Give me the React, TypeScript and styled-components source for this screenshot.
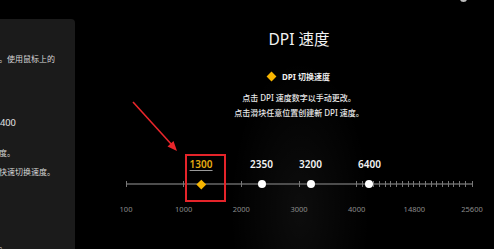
import styled, { createGlobalStyle } from "styled-components"

const GlobalStyle = createGlobalStyle`
  html, body {
    margin: 0;
    padding: 0;
    background: #000;
  }
  body {
    width: 494px;
    height: 249px;
    overflow: hidden;
    font-family: "Noto Sans", "Noto Sans CJK SC", sans-serif;
    color: #fff;
  }
`

const SCALE_WIDTH = 346
const SEG = SCALE_WIDTH / 6

// piecewise scale: 100-1000-2000-3000-4000 each one segment, 4000-25600 takes two
const pos = (dpi: number) => {
  const stops = [100, 1000, 2000, 3000, 4000]
  if (dpi <= 4000) {
    for (let i = 0; i < stops.length - 1; i++) {
      if (dpi <= stops[i + 1]) {
        return SEG * i + ((dpi - stops[i]) / (stops[i + 1] - stops[i])) * SEG
      }
    }
  }
  return SEG * 4 + ((dpi - 4000) / 21600) * SEG * 2
}

const ticks = [
  0, SEG, SEG * 2, SEG * 3, SEG * 4,
  ...Array.from({ length: 19 }, (_, k) => SEG * 4 + (k + 1) * 5.72),
  SCALE_WIDTH,
]

const scaleLabels = [100, 1000, 2000, 3000, 4000, 14800, 25600]

const speeds = [
  { dpi: 1300, active: true },
  { dpi: 2350, active: false },
  { dpi: 3200, active: false },
  { dpi: 6400, active: false },
]

export default function App() {
  return (
    <Page>
      <GlobalStyle />
      <Sidebar>
        <SideSection>
          <SideHeading>DPI 速度</SideHeading>
          <SideText>设置鼠标的指针速度，数值越高指针移动越快。使用鼠标上的</SideText>
          <SideText>按钮来切换。</SideText>
        </SideSection>
        <SideSection>
          <SideValue>当前 DPI 速度：1300 / 2350 / 3200 / 6400</SideValue>
        </SideSection>
        <SideSection>
          <SideText>拖动滑块上的圆点，即可分别调整每个预设速度。</SideText>
          <SideText>按下鼠标上的速度切换按钮，可在各预设之间快速切换速度。</SideText>
        </SideSection>
        <SideSection>
          <SideText>此外还可以在下方的设置中调整更多相关参数。</SideText>
        </SideSection>
      </Sidebar>

      <Main>
        <Title>DPI 速度</Title>
        <Legend>
          <LegendDiamond />
          <LegendText>DPI 切换速度</LegendText>
        </Legend>
        <Help>
          <p>点击 DPI 速度数字以手动更改。</p>
          <p>点击滑块任意位置创建新 DPI 速度。</p>
        </Help>

        <Slider>
          <Track />
          {ticks.map((x, i) => (
            <Tick key={i} style={{ left: x }} />
          ))}
          {speeds.map((s) => (
            <ValueLabel key={s.dpi} $active={s.active} style={{ left: pos(s.dpi) }}>
              {s.dpi}
            </ValueLabel>
          ))}
          {speeds.map((s) =>
            s.active ? (
              <DiamondThumb key={s.dpi} style={{ left: pos(s.dpi) }} />
            ) : (
              <DotThumb key={s.dpi} style={{ left: pos(s.dpi) }} />
            )
          )}
          {scaleLabels.map((d) => (
            <ScaleLabel key={d} style={{ left: pos(d) }}>
              {d}
            </ScaleLabel>
          ))}
        </Slider>
      </Main>

      <CornerIcon />
      <Highlight />
      <Arrow width="54" height="58" viewBox="0 0 54 58">
        <line x1="5" y1="4" x2="44" y2="47" stroke="#e8262b" strokeWidth="1.6" />
        <polygon points="49,53 39.5,48.5 45.5,43" fill="#e8262b" />
      </Arrow>
    </Page>
  )
}

const Page = styled.div`
  position: relative;
  display: flex;
  width: 494px;
  height: 249px;
  overflow: hidden;
`

/* the panel is wider than the window; only its right edge shows */
const Sidebar = styled.aside`
  flex: none;
  display: flex;
  flex-direction: column;
  gap: 0;
  box-sizing: border-box;
  width: 250px;
  height: 240px;
  margin-left: -175px;
  margin-top: 19px;
  padding: 12px 0 0 14px;
  background: #1b1b1b;
  border-top-right-radius: 4px;
  overflow: hidden;

  & > :nth-child(2) { margin-top: 36px; }
  & > :nth-child(3) { margin-top: 15.6px; }
  & > :nth-child(4) { margin-top: 60px; }
`

const SideSection = styled.section`
  display: flex;
  flex-direction: column;
  gap: 0;

  &:nth-child(3) { gap: 5.4px; }
`

const SideHeading = styled.h4`
  margin: 0 0 7px;
  font-size: 10px;
  line-height: 14px;
  font-weight: 500;
  color: #eee;
`

const SideText = styled.p`
  margin: 0;
  white-space: nowrap;
  font-size: 8px;
  line-height: 14px;
  color: #d6d6d6;
`

const SideValue = styled.p`
  margin: 0;
  white-space: nowrap;
  font-size: 9.3px;
  line-height: 14px;
  color: #e4e4e4;
`

const Main = styled.main`
  flex: 1;
  display: flex;
  flex-direction: column;
  align-items: center;
  padding: 29px 0 0 29px;
  background: radial-gradient(
    ellipse 70px 150px at 225px 210px,
    rgba(255, 255, 255, 0.05),
    rgba(255, 255, 255, 0) 100%
  );
`

const Title = styled.h1`
  margin: 0;
  font-size: 15.5px;
  line-height: 20px;
  font-weight: 400;
  color: #f2f2f2;
`

const Legend = styled.div`
  display: flex;
  align-items: center;
  gap: 7px;
  margin-top: 21px;
  height: 12px;
`

const LegendDiamond = styled.span`
  width: 7px;
  height: 7px;
  background: #f7b500;
  transform: rotate(45deg);
`

const LegendText = styled.span`
  font-size: 8px;
  font-weight: 700;
  color: #f0f0f0;
`

const Help = styled.div`
  margin-top: 9.4px;
  text-align: center;

  p {
    margin: 0;
    font-size: 8px;
    line-height: 14.6px;
    font-weight: 500;
    color: #e8e8e8;
  }
`

const Slider = styled.div`
  position: relative;
  flex: none;
  width: ${SCALE_WIDTH}px;
  height: 62px;
  margin-top: 36.4px;
`

const Track = styled.div`
  position: absolute;
  left: 0;
  right: 0;
  top: 26px;
  height: 2px;
  background: #4d4d4d;
`

const Tick = styled.div`
  position: absolute;
  top: 24px;
  width: 1px;
  height: 6px;
  margin-left: -0.5px;
  background: #777;
`

const ValueLabel = styled.span<{ $active: boolean }>`
  position: absolute;
  top: 1px;
  transform: translateX(-50%);
  font-size: 10px;
  line-height: 12px;
  font-weight: 600;
  color: ${(p) => (p.$active ? "#e6ac12" : "#f4f4f4")};
  border-bottom: 1px solid ${(p) => (p.$active ? "#9a9a9a" : "transparent")};
`

const DotThumb = styled.span`
  position: absolute;
  top: 23px;
  width: 8px;
  height: 8px;
  margin-left: -4px;
  border-radius: 50%;
  background: #fff;
`

const DiamondThumb = styled.span`
  position: absolute;
  top: 23.7px;
  width: 6.6px;
  height: 6.6px;
  margin-left: -3.3px;
  background: #f7b500;
  transform: rotate(45deg);
`

const ScaleLabel = styled.span`
  position: absolute;
  top: 47px;
  transform: translateX(-50%);
  font-size: 7.5px;
  line-height: 10px;
  color: #8c8c8c;
`

const CornerIcon = styled.span`
  position: absolute;
  left: 460px;
  top: -4px;
  width: 7px;
  height: 6px;
  border-radius: 50%;
  background: #bdbdbd;
`

const Highlight = styled.div`
  position: absolute;
  left: 185px;
  top: 154px;
  width: 41px;
  height: 48px;
  box-sizing: border-box;
  border: 2px solid #e5242a;
`

const Arrow = styled.svg`
  position: absolute;
  left: 128px;
  top: 98px;
`
